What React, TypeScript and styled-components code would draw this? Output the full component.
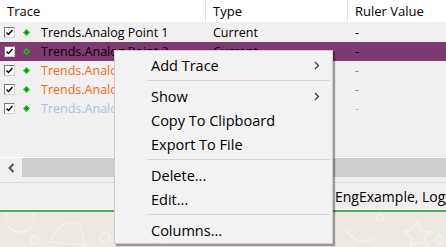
import React from "react";
import styled, { createGlobalStyle } from "styled-components";

const Global = createGlobalStyle`
  html, body { margin: 0; padding: 0; }
  body { width: 446px; height: 247px; overflow: hidden; font-family: "Open Sans", "Noto Sans", sans-serif; }
`;

const Page = styled.div`
  position: relative;
  width: 446px;
  height: 247px;
  display: flex;
  flex-direction: column;
  background: #f0f0f0;
  overflow: hidden;
`;

const Grid = styled.div`
  display: grid;
  grid-template-columns: 206px 142px 1fr;
  font-size: 12.5px;
  color: #000;
`;

const HeadCell = styled.div<{ $last?: boolean }>`
  height: 22px;
  background: #fff;
  display: flex;
  align-items: center;
  padding-left: 7px;
  font-size: 13px;
  border-right: ${(p) => (p.$last ? "none" : "1px solid #e5e5e5")};
  border-bottom: 1px solid #f0f0f0;
`;

const Row = styled.div<{ $sel?: boolean }>`
  display: contents;
  & > div { background: ${(p) => (p.$sel ? "#7f3b6f" : "#f0f0f0")}; }
`;

const Cell = styled.div<{ $color: string }>`
  height: 19px;
  display: flex;
  align-items: center;
  padding-left: 7px;
  color: ${(p) => p.$color};
  white-space: nowrap;
  overflow: hidden;
`;

const TraceCell = styled(Cell)`
  padding-left: 4px;
`;

const Check = styled.span`
  width: 11px;
  height: 11px;
  box-sizing: border-box;
  background: #fff;
  border: 1px solid #7a7a7a;
  border-right-color: #d0d0d0;
  border-bottom-color: #d0d0d0;
  display: flex;
  align-items: center;
  justify-content: center;
`;

const Diamond = styled.svg`
  margin-left: 8px;
  margin-right: 11px;
`;

const Fill = styled.div`
  flex: 1;
  border-bottom: 1px solid #fff;
`;

const Scrollbar = styled.div`
  height: 19px;
  display: flex;
  background: #f0f0f0;
`;

const ArrowBtn = styled.div`
  width: 22px;
  display: flex;
  align-items: center;
  justify-content: center;
`;

const Thumb = styled.div`
  flex: 1;
  background: #cdcdcd;
`;

const Gap = styled.div`
  height: 5px;
  border-bottom: 1px solid #dadada;
`;

const Status = styled.div`
  height: 27px;
  background: #f0eeee;
  display: flex;
  align-items: center;
  padding-left: 335px;
  font-size: 14px;
  white-space: nowrap;
  border-bottom: 2px solid #4caf50;
  overflow: hidden;
`;

const StatusText = styled.span`
  color: #000;
`;

const Wallpaper = styled.div`
  height: 35px;
  flex: none;
  background: #ede9e2;
  overflow: hidden;
`;

const Menu = styled.div`
  position: absolute;
  left: 114px;
  top: 50px;
  width: 219px;
  box-sizing: border-box;
  background: #f2f2f2;
  border: 1px solid #cccccc;
  padding: 2px 2px 1px 2px;
  box-shadow: 2px 2px 1px rgba(0, 0, 0, 0.35);
  font-size: 14.5px;
  color: #000;
`;

const Item = styled.div`
  height: 24px;
  display: flex;
  align-items: center;
  padding-left: 34px;
  position: relative;
`;

const Chevron = styled.svg`
  position: absolute;
  right: 10px;
  top: 8px;
`;

const Sep = styled.div`
  height: 7px;
  display: flex;
  align-items: center;
  padding-left: 30px;
  &::after {
    content: "";
    flex: 1;
    height: 1px;
    background: #d7d7d7;
  }
`;

const rows = [
  { name: "Trends.Analog Point 1", type: "Current", val: "-", color: "#000", sel: false },
  { name: "Trends.Analog Point 2", type: "Current", val: "-", color: "#000", sel: true },
  { name: "Trends.Analog Point 3", type: "Current", val: "-", color: "#f56a14", sel: false },
  { name: "Trends.Analog Point 4", type: "Current", val: "-", color: "#f56a14", sel: false },
  { name: "Trends.Analog Point 5", type: "Current", val: "-", color: "#a9c3e2", sel: false },
];

const CheckMark = () => (
  <svg width="7" height="7" viewBox="0 0 7 7">
    <path d="M0.5 3.5 L2.5 5.5 L6.5 1" stroke="#000" strokeWidth="1.4" fill="none" />
  </svg>
);

const Arrow = () => (
  <Chevron width="6" height="9" viewBox="0 0 6 9">
    <path d="M1 1 L4.5 4.5 L1 8" stroke="#333" strokeWidth="1.1" fill="none" />
  </Chevron>
);

export default function App() {
  return (
    <>
      <Global />
      <Page>
        <Grid>
          <HeadCell>Trace</HeadCell>
          <HeadCell>Type</HeadCell>
          <HeadCell $last>Ruler Value</HeadCell>
          {rows.map((r) => (
            <Row key={r.name} $sel={r.sel}>
              <TraceCell $color={r.color}>
                <Check>
                  <CheckMark />
                </Check>
                <Diamond width="7" height="7" viewBox="0 0 7 7">
                  <polygon points="3.5,0 7,3.5 3.5,7 0,3.5" fill="#1fbf1f" />
                  <polygon points="3.5,2 5,3.5 3.5,5 2,3.5" fill="#0a7a0a" />
                </Diamond>
                {r.name}
              </TraceCell>
              <Cell $color={r.color}>{r.type}</Cell>
              <Cell $color={r.color}>{r.val}</Cell>
            </Row>
          ))}
        </Grid>
        <Fill />
        <Scrollbar>
          <ArrowBtn>
            <svg width="7" height="10" viewBox="0 0 7 10">
              <path d="M5.5 1 L1.5 5 L5.5 9" stroke="#555" strokeWidth="2" fill="none" />
            </svg>
          </ArrowBtn>
          <Thumb />
        </Scrollbar>
        <Gap />
        <Status>
          <StatusText>EngExample, Logging</StatusText>
        </Status>
        <Wallpaper>
          <svg width="446" height="35" viewBox="0 0 446 35">
            <g fill="none" stroke="#f5f2ed" strokeWidth="1.5">
              <circle cx="20" cy="6" r="14" />
              <path d="M50 30 Q60 5 80 12 L85 33 Z" />
              <circle cx="35" cy="28" r="4" />
              <circle cx="105" cy="26" r="5" />
              <path d="M150 3 Q170 22 160 34" />
              <circle cx="380" cy="6" r="3" />
              <path d="M410 18 L418 10 L422 20 L432 20 L424 26 L428 34 L418 30 L410 34 L412 26 L404 20 Z" />
              <circle cx="440" cy="28" r="4" />
              <path d="M345 18 Q360 36 375 26" />
            </g>
          </svg>
        </Wallpaper>
        <Menu>
          <Item>
            Add Trace
            <Arrow />
          </Item>
          <Sep />
          <Item>
            Show
            <Arrow />
          </Item>
          <Item>Copy To Clipboard</Item>
          <Item>Export To File</Item>
          <Sep />
          <Item>Delete...</Item>
          <Item>Edit...</Item>
          <Sep />
          <Item>Columns...</Item>
        </Menu>
      </Page>
    </>
  );
}
